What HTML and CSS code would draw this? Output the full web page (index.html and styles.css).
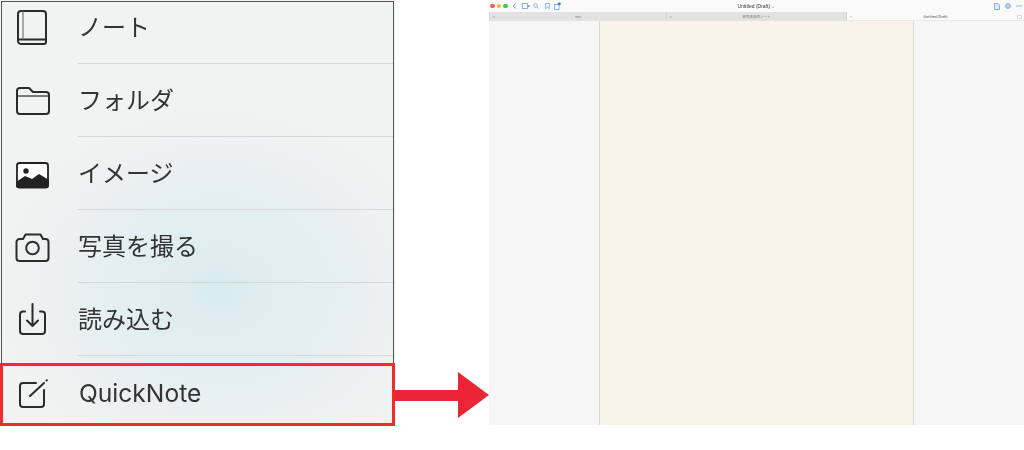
FILE: index.html
```html
<!DOCTYPE html>
<html lang="ja">
<head>
<meta charset="utf-8">
<title>QuickNote</title>
<link rel="stylesheet" href="styles.css">
</head>
<body>
<div class="page">
  <section class="menu">
    <div class="list">
      <div class="row first">
        <span class="ic"><svg width="36" height="36" viewBox="0 0 36 36" fill="none" stroke="#2b2b2b" stroke-width="2" stroke-linejoin="round" stroke-linecap="round"><path d="M3 31V5a3 3 0 0 1 3-3h22a3 3 0 0 1 3 3v28a2 2 0 0 1-2 2H6a3 3 0 0 1-3-3.500"/><path d="M4 30.500h27"/><path d="M8 3v26.500" stroke="#888" stroke-width="1.400"/></svg></span>
        <span class="body"><span class="label">ノート</span></span>
      </div>
      <div class="row">
        <span class="ic"><svg width="36" height="36" viewBox="0 0 36 36" fill="none" stroke="#2b2b2b" stroke-width="2" stroke-linejoin="round"><path d="M2 13V8a3 3 0 0 1 3-3h9l4 4h13a3 3 0 0 1 3 3v16a3 3 0 0 1-3 3H5a3 3 0 0 1-3-3V13z"/><path d="M2 13h32" stroke-width="1.200"/></svg></span>
        <span class="body"><span class="label">フォルダ</span></span>
      </div>
      <div class="row">
        <span class="ic"><svg width="36" height="36" viewBox="0 0 36 36"><rect x="2" y="7" width="31" height="24.500" rx="2.500" fill="#fff" stroke="#222" stroke-width="1.800"/><circle cx="11" cy="15" r="2.700" fill="#222"/><path d="M1 26l9-6 7 3 7-5 10 6v5.500A2.500 2.500 0 0 1 31.500 32h-28A2.500 2.500 0 0 1 1 29.500z" fill="#222"/></svg></span>
        <span class="body"><span class="label">イメージ</span></span>
      </div>
      <div class="row">
        <span class="ic"><svg width="36" height="36" viewBox="0 0 36 36" fill="none" stroke="#2b2b2b" stroke-width="2" stroke-linejoin="round"><path d="M4.500 10H8l2.500-4.500h15L28 10h2.500A3 3 0 0 1 33.500 13v16a3 3 0 0 1-3 3H4.500a3 3 0 0 1-3-3V13a3 3 0 0 1 3-3z"/><circle cx="17.500" cy="19" r="6.300"/></svg></span>
        <span class="body"><span class="label">写真を撮る</span></span>
      </div>
      <div class="row">
        <span class="ic"><svg width="36" height="36" viewBox="0 0 36 36" fill="none" stroke="#2b2b2b" stroke-width="2" stroke-linejoin="round" stroke-linecap="round"><path d="M10 9.500H8a3 3 0 0 0-3 3V29a3 3 0 0 0 3 3h19a3 3 0 0 0 3-3V12.500a3 3 0 0 0-3-3h-2"/><path d="M17.500 2v22M12 18.500l5.500 5.500 5.500-5.500"/></svg></span>
        <span class="body"><span class="label">読み込む</span></span>
      </div>
    </div>
    <div class="row quick">
      <span class="ic"><svg width="36" height="36" viewBox="0 0 36 36" fill="none" stroke="#2b2b2b" stroke-width="2" stroke-linejoin="round" stroke-linecap="round"><path d="M21 10H8a3 3 0 0 0-3 3v18a3 3 0 0 0 3 3h18a3 3 0 0 0 3-3V17"/><path d="M15 23L29 10"/><path d="M31.500 7.500l.3-.3"/></svg></span>
      <span class="body"><span class="label">QuickNote</span></span>
    </div>
  </section>

  <div class="arrow"><span class="shaft"></span><span class="head"></span></div>

  <section class="app">
    <header class="toolbar">
      <div class="tools left">
        <span class="dot red"></span><span class="dot amber"></span><span class="dot green"></span>
        <svg class="t chev" width="5" height="6" viewBox="0 0 5 6"><path d="M3.500.8L1.200 3l2.300 2.200" fill="none" stroke="#4a90e2"/></svg>
        <svg class="t" width="8" height="6" viewBox="0 0 8 6"><rect x=".5" y=".5" width="5" height="5" fill="none" stroke="#6fa3dd" stroke-width=".8"/><path d="M5.500 2h2v2h-2z" fill="#6fa3dd"/></svg>
        <svg class="t find" width="6" height="6" viewBox="0 0 6 6"><circle cx="2.500" cy="2.500" r="1.800" fill="none" stroke="#6fa3dd" stroke-width=".8"/><path d="M3.800 3.800L5.500 5.500" stroke="#6fa3dd" stroke-width=".8"/></svg>
        <svg class="t mark" width="5" height="6" viewBox="0 0 5 6"><path d="M.6.500h3.800v5L2.500 4.200.6 5.500z" fill="none" stroke="#6fa3dd" stroke-width=".8"/></svg>
        <svg class="t share" width="7" height="8" viewBox="0 0 7 8"><rect x=".5" y="2.500" width="4.500" height="5" fill="none" stroke="#6fa3dd" stroke-width=".8"/><circle cx="5.300" cy="1.800" r="1.500" fill="#2f80ed"/></svg>
      </div>
      <div class="title">Untitled (Draft) <span class="caret">⌄</span></div>
      <div class="tools right">
        <svg class="t" width="6" height="7" viewBox="0 0 6 7"><path d="M.5.500h3.500L5.500 2v4.500h-5z" fill="#dce9f8" stroke="#5b9be0" stroke-width=".7"/></svg>
        <svg class="t" width="6" height="6" viewBox="0 0 6 6"><circle cx="3" cy="3" r="2.500" fill="#b6d2f0" stroke="#6fa3dd" stroke-width=".7"/></svg>
        <svg class="t" width="6" height="2" viewBox="0 0 6 2"><circle cx="1" cy="1" r=".7" fill="#5b9be0"/><circle cx="3" cy="1" r=".7" fill="#5b9be0"/><circle cx="5" cy="1" r=".7" fill="#5b9be0"/></svg>
      </div>
    </header>
    <nav class="tabs">
      <div class="tab one"><span class="x">×</span><span class="tab-name">text</span></div>
      <div class="tab two"><span class="x">×</span><span class="tab-name">研究改善的ノート</span></div>
      <div class="tab on"><span class="x">×</span><span class="tab-name">Untitled (Draft)</span><span class="split"></span></div>
    </nav>
    <div class="panes">
      <div class="side"></div>
      <div class="paper"></div>
      <div class="side"></div>
    </div>
  </section>
</div>
</body>
</html>
```

FILE: styles.css
```css
* { box-sizing: border-box; }
html, body { margin: 0; padding: 0; background: #fff; }
body { width: 1024px; height: 450px; overflow: hidden; font-family: "Inter", "Noto Sans CJK JP", sans-serif; }
.page { display: flex; align-items: flex-start; height: 450px; }

/* left menu */
.menu {
  width: 395px;
  height: 426px;
  flex: none;
  display: flex;
  flex-direction: column;
  background: radial-gradient(ellipse 230px 190px at 218px 290px, #d9ebef 0%, #e4eff1 45%, #eef1f1 78%, #f1f2f2 100%);
}
.list {
  height: 363px;
  margin: 1px 1px 0 1px;
  border: solid #555;
  border-width: 1px 1px 0 1px;
  overflow: hidden;
}
.row { display: flex; height: 73px; align-items: stretch; }
.row.first { height: 62px; }
.row.first .ic { padding-top: 7px; align-items: flex-start; }
.row.first .body { padding-top: 7px; align-items: flex-start; }
.ic { width: 76px; flex: none; display: flex; align-items: center; padding-left: 13px; }
.ic svg { filter: blur(.3px); }
.body { flex: 1; display: flex; align-items: center; border-bottom: 1px solid #d4d8d9; padding-bottom: 2px; }
.label { font-family: "Noto Sans CJK JP", sans-serif; font-size: 24px; line-height: 34px; color: #333; font-weight: 400; filter: blur(.3px); }
.row.quick {
  height: 63px;
  border: 3px solid #ee2e2e;
  margin-top: -1px;
}
.quick .ic { width: 76px; padding-left: 12px; padding-bottom: 8px; }
.quick .body { border: 0; padding-bottom: 4px; }
.quick .label { font-family: "Inter", sans-serif; font-size: 24.600px; }

/* arrow */
.arrow { width: 94px; height: 46px; margin-top: 372px; flex: none; display: flex; align-items: center; }
.shaft { width: 64px; height: 11px; background: #ea2535; }
.head { width: 0; height: 0; margin-left: -1px; border-style: solid; border-width: 23px 0 23px 31px; border-color: transparent transparent transparent #ea2535; }

/* app thumbnail */
.app { flex: 1; height: 425px; display: flex; flex-direction: column; background: #f6f6f6; }
.toolbar { height: 12px; flex: none; background: #fafafa; display: flex; align-items: center; position: relative; padding: 0 2px 0 1px; justify-content: space-between; }
.tools { display: flex; align-items: center; }
.dot { width: 4.500px; height: 4.500px; border-radius: 50%; margin-right: 2px; }
.red { background: #f0605a; }
.amber { background: #f5b33e; }
.green { background: #3cc84a; }
.t { flex: none; margin-left: 5px; }
.chev { margin-left: 2px; }
.find { margin-left: 3px; }
.mark { margin-left: 6px; }
.share { margin-left: 4px; }
.title { font-family: "Liberation Sans", sans-serif; font-size: 5px; line-height: 12px; color: #333; position: absolute; left: 240px; width: 55px; text-align: center; filter: blur(.2px); }
.caret { color: #888; }
.tabs { height: 9px; flex: none; display: flex; background: #e2e2e2; font-family: "Noto Sans CJK JP", sans-serif; font-size: 3.500px; line-height: 9px; color: #777; }
.tab { position: relative; text-align: center; border-left: 1px solid #d4d4d4; }
.tab.one { width: 177px; }
.tab.two { width: 180px; }
.tab.on { flex: 1; background: #fafafa; color: #444; border-bottom: 1px solid #e8e8e8; }
.x { position: absolute; left: 2px; top: 0; color: #999; }
.split { position: absolute; right: 2px; top: 2.500px; width: 5px; height: 4px; border: 1px solid #ddd; }
.panes { flex: 1; display: flex; }
.side { flex: none; }
.side:first-child { width: 111px; border-right: 1px solid #dcdcd6; }
.side:last-child { width: 111px; border-left: 1px solid #dcdcd6; }
.paper { flex: 1; background: #f7f5e9; }
```
